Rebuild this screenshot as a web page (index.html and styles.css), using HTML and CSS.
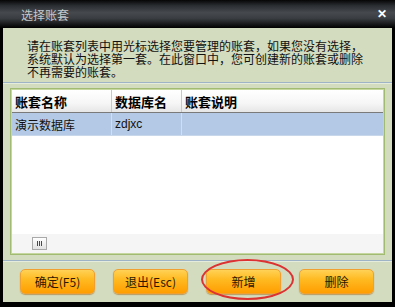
FILE: index.html
```html
<!DOCTYPE html>
<html lang="zh-CN">
<head>
    <meta charset="UTF-8">
    <title>选择账套</title>
    <link rel="stylesheet" href="styles.css">
</head>
<body>
    <div class="window">
        <!-- Title bar -->
        <div class="titlebar">
            <span class="title">选择账套</span>
            <span class="close">&#x2715;</span>
        </div>

        <div class="content">
            <div class="intro">
                <div class="line">请在账套列表中用光标选择您要管理的账套，如果您没有选择，</div>
                <div class="line">系统默认为选择第一套。在此窗口中，您可创建新的账套或删除</div>
                <div class="line">不再需要的账套。</div>
            </div>
            <div class="sep"></div>

            <!-- Account list -->
            <div class="grid">
                <div class="grid-inner">
                    <div class="row head">
                        <div class="cell c1">账套名称</div>
                        <div class="cell c2">数据库名</div>
                        <div class="cell c3">账套说明</div>
                    </div>
                    <div class="row selected">
                        <div class="cell c1">演示数据库</div>
                        <div class="cell c2">zdjxc</div>
                        <div class="cell c3"></div>
                    </div>
                    <div class="filler"></div>
                    <div class="hscroll">
                        <div class="thumb">
                            <span></span><span></span><span></span>
                        </div>
                    </div>
                </div>
            </div>
            <div class="sep"></div>

            <div class="buttons">
                <button class="btn">确定(F5)</button>
                <button class="btn">退出(Esc)</button>
                <button class="btn">新增</button>
                <button class="btn">删除</button>
            </div>
        </div>

        <!-- red marker round the 新增 button -->
        <div class="marker"></div>
    </div>
</body>
</html>
```

FILE: styles.css
```css
body {
    margin: 0;
    background: #000;
    font-family: "Liberation Sans", "Noto Sans CJK SC", sans-serif;
    font-size: 12px;
}

.window {
    position: relative;
    width: 395px;
    height: 307px;
    background: #000;
    display: flex;
    flex-direction: column;
}

/* Title bar */
.titlebar {
    height: 28px;
    display: flex;
    align-items: center;
    justify-content: space-between;
    padding: 0 8px 0 21px;
    background: linear-gradient(#050505 0, #2a2d31 20%, #464a4f 45%, #3a3e42 65%, #141516 88%, #000 100%);
}
.title {
    color: #c4c8cc;
    font-size: 12px;
}
.close {
    color: #fff;
    font-weight: bold;
    font-size: 12px;
}

/* Dialog body */
.content {
    margin: 0 3px;
    height: 274px;
    background: #d3dcbf;
    display: flex;
    flex-direction: column;
}

.intro {
    padding: 11px 0 0 24px;
    height: 43px;
    box-sizing: content-box;
    color: #111;
    font-family: "Noto Sans CJK SC", sans-serif;
    font-size: 12px;
}
.intro .line {
    height: 13px;
    line-height: 13px;
    white-space: nowrap;
}

.sep {
    height: 1px;
    background: #9fb3c6;
    border-bottom: 1px solid #e6ecdc;
}

/* Account list */
.grid {
    margin: 4px 7px 5px 7px;
    height: 163px;
    border: 1px solid #a2bb72;
    background: #c6d8a0;
    padding: 1px;
}
.grid-inner {
    height: 100%;
    background: #fff;
    display: flex;
    flex-direction: column;
}

.row {
    display: flex;
    height: 22px;
}
.cell {
    display: flex;
    align-items: center;
    padding-left: 3px;
    border-right: 1px solid #d8d8d8;
    box-sizing: border-box;
}
.c1 { width: 100px; }
.c2 { width: 70px; }
.c3 { flex: 1; border-right: none; }

.head {
    background: linear-gradient(#ffffff, #f6f6f6 60%, #e6e6e6);
    border-bottom: 1px solid #7a7a7a;
    font-family: "Noto Sans CJK SC", sans-serif;
    font-weight: bold;
    font-size: 13px;
    color: #000;
}
.head .cell {
    border-right: 1px solid #c8c8c8;
}
.head .c3 { border-right: none; }

.selected {
    background: #b3c9e6;
    color: #111;
    border-bottom: 1px solid #c9d7ea;
}
.selected .cell {
    border-right: 1px solid #d2deee;
}
.selected .c3 { border-right: none; }

.filler {
    flex: 1;
}

.hscroll {
    height: 19px;
    background: #f5f5f5;
    display: flex;
    align-items: center;
    padding-left: 20px;
}
.thumb {
    width: 15px;
    height: 13px;
    box-sizing: border-box;
    border: 1px solid #a9a9a9;
    background: linear-gradient(#ffffff, #e2e2e2);
    display: flex;
    justify-content: center;
    align-items: center;
    gap: 1px;
}
.thumb span {
    width: 1px;
    height: 5px;
    background: #4a4a4a;
}

/* Buttons */
.buttons {
    display: flex;
    padding: 7px 0 0 17px;
    gap: 18px;
}
.btn {
    width: 75px;
    height: 25px;
    padding: 0;
    border: 1px solid #f0a030;
    border-radius: 5px;
    background: linear-gradient(#ffd256 0, #ffba22 40%, #ff9e00 100%);
    box-shadow: 0 1px 1px rgba(160, 90, 0, 0.5);
    color: #2a1800;
    font-family: "Noto Sans CJK SC", sans-serif;
    font-size: 12px;
    cursor: pointer;
}

/* Red highlight ellipse */
.marker {
    position: absolute;
    left: 201px;
    top: 259px;
    width: 93px;
    height: 41px;
    box-sizing: border-box;
    border: 2px solid #dc3232;
    border-radius: 50%;
}
```
